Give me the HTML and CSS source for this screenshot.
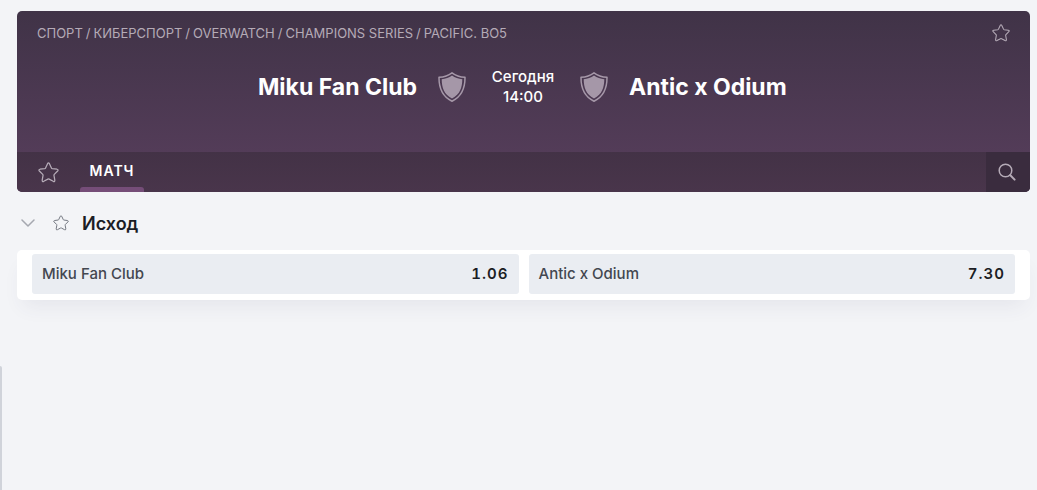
FILE: index.html
```
<!DOCTYPE html>
<html lang="ru">
<head>
  <meta charset="UTF-8" />
  <meta name="viewport" content="width=device-width, initial-scale=1.0" />
  <title>Miku Fan Club - Antic x Odium</title>
  <link rel="stylesheet" href="styles.css">
</head>
<body>
  <svg class="sprite" aria-hidden="true">
    <symbol id="star" viewBox="0 0 20 20">
      <path d="M9.1 1.600Q10 .2 10.900 1.600L12.800 5.700Q13 6.200 13.600 6.300L18.100 6.900Q19.800 7.300 18.700 8.600L15.500 11.800Q15.100 12.200 15.200 12.800L16 17.300Q16.100 19.100 14.500 18.400L10.600 16.300Q10 16 9.400 16.300L5.500 18.400Q3.900 19.100 4 17.300L4.800 12.800Q4.900 12.200 4.500 11.800L1.300 8.600Q.2 7.300 1.900 6.900L6.400 6.300Q7 6.200 7.200 5.700Z" fill="none" stroke="currentColor" stroke-width="1.200" stroke-linejoin="round" />
    </symbol>
    <symbol id="shield" viewBox="0 0 28 30">
      <path d="M14 .8C10.500 3.500 6 5 1 5.300C.9 15 3 24 14 29.200C25 24 27.100 15 27 5.300C22 5 17.500 3.500 14 .8Z" fill="none" stroke="currentColor" stroke-width="1.500" stroke-linejoin="round" />
      <path d="M14 3.500C11 5.700 7.500 6.900 3.700 7.300C3.800 15.500 5.700 22.300 14 26.500C22.300 22.300 24.200 15.500 24.300 7.300C20.500 6.900 17 5.700 14 3.500Z" fill="currentColor" />
    </symbol>
  </svg>

  <header class="event">
    <div class="event-top">
      <nav class="breadcrumbs">
        <a href="#">СПОРТ</a><span>/</span><a href="#">КИБЕРСПОРТ</a><span>/</span><a href="#">OVERWATCH</a><span>/</span><a href="#">CHAMPIONS SERIES</a><span>/</span><a href="#">PACIFIC. BO5</a>
      </nav>
      <button class="icon-btn" aria-label="В избранное"><svg class="star"><use href="#star" /></svg></button>
    </div>

    <div class="teams">
      <div class="team home">
        <h1>Miku Fan Club</h1>
        <svg class="shield"><use href="#shield" /></svg>
      </div>
      <div class="time">Сегодня<br>14:00</div>
      <div class="team">
        <svg class="shield"><use href="#shield" /></svg>
        <h1>Antic x Odium</h1>
      </div>
    </div>

    <div class="tabs">
      <button class="icon-btn tab-star" aria-label="Избранные исходы"><svg class="star big"><use href="#star" /></svg></button>
      <button class="tab active">МАТЧ</button>
      <button class="icon-btn search" aria-label="Поиск">
        <svg width="18" height="18" viewBox="0 0 18 18" fill="none" stroke="currentColor">
          <circle cx="7.500" cy="7.500" r="6.300" stroke-width="1.500" />
          <path d="M12.300 12.300L16.600 16.600" stroke-width="2" stroke-linecap="round" />
        </svg>
      </button>
    </div>
  </header>

  <main>
    <div class="market-title">
      <button class="icon-btn chevron" aria-label="Свернуть">
        <svg width="14" height="8" viewBox="0 0 14 8" fill="none" stroke="currentColor" stroke-width="1.500" stroke-linecap="round" stroke-linejoin="round">
          <path d="M1 1L7 7L13 1" />
        </svg>
      </button>
      <button class="icon-btn market-star" aria-label="В избранное"><svg class="star small"><use href="#star" /></svg></button>
      <h2>Исход</h2>
    </div>
    <div class="market">
      <button class="outcome"><span>Miku Fan Club</span><span class="odds">1.06</span></button>
      <button class="outcome"><span>Antic x Odium</span><span class="odds">7.30</span></button>
    </div>
  </main>

  <div class="scroll-thumb"></div>
</body>
</html>
```
FILE: styles.css
```
* {
  box-sizing: border-box;
}
body {
  margin: 0;
  min-height: 100vh;
  padding: 11px 7px 0 17px;
  background: #f3f4f7;
  color: #1b1d24;
  font-family: Inter, "Noto Sans", sans-serif;
  font-size: 15px;
}
button {
  margin: 0;
  padding: 0;
  border: none;
  background: none;
  font-family: inherit;
  cursor: pointer;
}
h1,
h2 {
  margin: 0;
}
.sprite {
  display: none;
}
.icon-btn {
  display: flex;
  align-items: center;
  justify-content: center;
  color: #b5abb7;
}
.star {
  width: 18px;
  height: 18px;
}
.star.big {
  width: 21px;
  height: 21px;
}
.star.small {
  width: 16px;
  height: 16px;
}

/* event header */
.event {
  border-radius: 5px;
  overflow: hidden;
  background: linear-gradient(#403347, #533c58 141px);
}
.event-top {
  display: flex;
  justify-content: space-between;
  align-items: center;
  height: 44px;
  padding: 0 20px;
}
.breadcrumbs {
  display: flex;
  gap: 3px;
  color: #b5abb7;
  font-size: 13px;
}
.breadcrumbs a {
  color: inherit;
  text-decoration: none;
}
.teams {
  display: grid;
  grid-template-columns: 1fr 100px 1fr;
  align-items: center;
  height: 64px;
  margin-bottom: 33px;
  padding-right: 1px;
}
.team {
  display: flex;
  align-items: center;
  gap: 21px;
  padding: 0 7px;
}
.team.home {
  justify-content: flex-end;
}
.team h1 {
  color: #fff;
  font-size: 23px;
  font-weight: 700;
}
.shield {
  width: 28px;
  height: 30px;
  color: #a597a8;
}
.time {
  color: #fff;
  font-weight: 500;
  line-height: 20px;
  text-align: center;
}
.tabs {
  display: flex;
  height: 40px;
  background: linear-gradient(#433246, #49354b);
}
.tab-star {
  width: 63px;
}
.tab {
  display: flex;
  flex-direction: column;
  align-items: center;
  width: 64px;
  color: #fff;
  font-size: 14px;
  font-weight: 600;
  letter-spacing: 1px;
  line-height: 38px;
}
.tab.active::after {
  content: "";
  width: 100%;
  height: 5px;
  margin-top: -3px;
  border-radius: 3px 3px 0 0;
  background: #754d78;
}
.search {
  width: 44px;
  margin-left: auto;
  padding-right: 2px;
  background: #3a2c3e;
}

/* market */
.market-title {
  display: flex;
  align-items: center;
  height: 58px;
  padding-top: 4px;
}
.market-title h2 {
  font-size: 18px;
  font-weight: 600;
}
.chevron {
  width: 22px;
  color: #a5a8b0;
}
.market-star {
  width: 43px;
  color: #6f737c;
}
.market {
  display: grid;
  grid-template-columns: 1fr 1fr;
  gap: 10px;
  padding: 4px 15px 6px;
  border-radius: 5px;
  background: #fff;
  box-shadow: 0 12px 20px -6px rgba(60, 60, 100, 0.08);
}
.outcome {
  display: flex;
  align-items: center;
  justify-content: space-between;
  height: 40px;
  padding: 0 10px 2px;
  border-radius: 3px;
  background: #eaedf2;
  color: #434750;
  font-size: 15px;
  font-weight: 500;
}
.odds {
  color: #1b1d24;
  font-weight: 600;
  font-variant-numeric: tabular-nums;
  letter-spacing: 1px;
}

/* scrollbar thumb of the side menu */
.scroll-thumb {
  position: fixed;
  top: 366px;
  bottom: 0;
  left: 0;
  width: 2px;
  border-radius: 0 2px 0 0;
  background: #d0d3da;
}
```
